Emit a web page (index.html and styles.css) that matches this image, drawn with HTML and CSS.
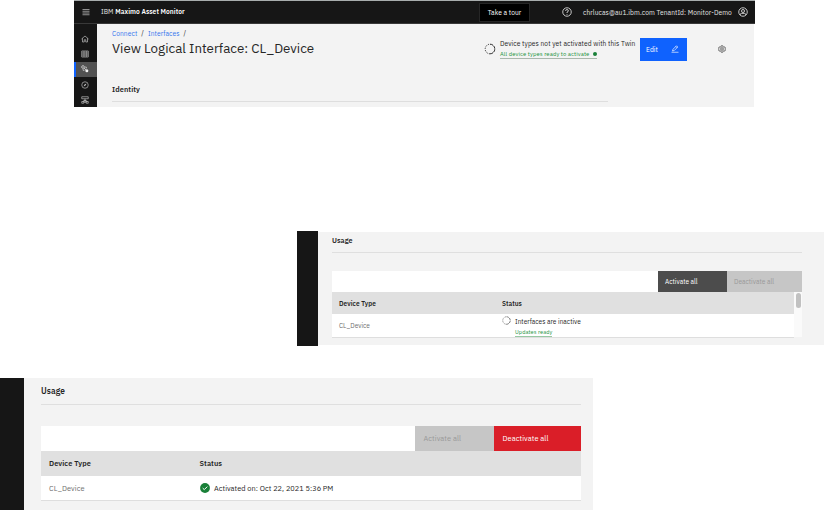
FILE: index.html
```
<!DOCTYPE html>
<html lang="en">
<head>
<meta charset="utf-8">
<title>Maximo Asset Monitor</title>
<link rel="stylesheet" href="styles.css">
</head>
<body>
<section class="monitor">
  <header class="topbar">
    <svg class="menu" viewBox="0 0 16 16"><path d="M1 3h14M1 6.500h14M1 10h14M1 13.500h14"/></svg>
    <div class="brand"><span>IBM</span> <b>Maximo Asset Monitor</b></div>
    <button class="tour"><span>Take a tour</span></button>
    <svg class="help" viewBox="0 0 20 20"><circle cx="10" cy="10" r="8.500"/><path d="M7.200 8V7.500Q7.200 5.200 10 5.200T12.800 7.600Q12.800 9.500 10 10.300V12M10 14v1.500"/></svg>
    <span class="account">chrlucas@au1.ibm.com TenantId: Monitor-Demo</span>
    <svg class="user" viewBox="0 0 20 20"><circle cx="10" cy="10" r="8.500"/><circle cx="10" cy="8" r="3"/><path d="M4.700 16v-1q0-2.200 2.300-2.200h6q2.300 0 2.300 2.200v1"/></svg>
  </header>
  <div class="shell">
    <nav class="rail">
      <a><svg viewBox="0 0 16 16"><path d="M1 8l7-6 7 6M3 6.500V14h3.500V9.500h3V14H13V6.500"/></svg></a>
      <a><svg viewBox="0 0 16 16"><path d="M1.500 2h13v12h-13zM1.500 6h13M1.500 10h13M6 2v12M10.500 2v12"/></svg></a>
      <a class="current"><svg viewBox="0 0 16 16"><circle cx="4" cy="4" r="2.700"/><path d="M6 6l4 4M8.500 4h2v3M4 8.500v2h3"/><circle class="solid" cx="11.700" cy="11.700" r="3"/></svg></a>
      <a><svg viewBox="0 0 16 16"><circle cx="8" cy="8" r="6.500"/><path class="solid" d="M11 5L9 9 5 11 7 7z"/></svg></a>
      <a><svg viewBox="0 0 16 16"><path d="M1.500 1.500h13v4h-13zM8 5.500v4M8 8L3.500 11M8 8l4.500 3M1.500 11h4v3.500h-4zM10.500 11h4v3.500h-4zM6 9.500h4v3H6z"/></svg></a>
    </nav>
    <main class="page">
      <div class="crumbs"><a>Connect</a><i>/</i><a>Interfaces</a><i>/</i></div>
      <div class="heading">
        <h1>View Logical Interface: CL_Device</h1>
        <svg class="spinner" viewBox="0 0 12 12"><path d="M6 1.200A4.800 4.800 0 0 1 6 10.800" stroke-dasharray="3.200 .6"/><path d="M6 10.800A4.800 4.800 0 0 1 6 1.200" stroke-dasharray="1.200 1.300"/></svg>
        <div class="notice"><span class="message">Device types not yet activated with this Twin</span><a class="ready"><span>All device types ready to activate</span><i></i></a></div>
        <button class="edit"><span>Edit</span><svg viewBox="0 0 16 16"><path d="M1 14.500h14M3 12l1-3.500L11 1.500l2.500 2.500-7 7zM9.500 3L12 5.500"/></svg></button>
        <svg class="gear" viewBox="0 0 16 16"><path d="M6.500 1.500h3l.5 2 1.500.8 2-.5 1.500 2.500L13.500 8l1.500 1.700-1.500 2.500-2-.5-1.500.8-.5 2h-3l-.5-2-1.500-.8-2 .5L1 9.700 2.500 8 1 6.300l1.500-2.500 2 .5L6 3.500z"/><circle cx="8" cy="8" r="2.600"/></svg>
      </div>
      <h2 class="identity">Identity</h2>
      <div class="rule"></div>
    </main>
  </div>
</section>

<section class="usage inactive">
  <div class="edge"></div>
  <div class="body">
    <h2>Usage</h2>
    <div class="toolbar"><button class="activate">Activate all</button><button class="deactivate">Deactivate all</button></div>
    <div class="scroller">
      <div class="table">
        <div class="row head"><b class="type">Device Type</b><b class="status">Status</b></div>
        <div class="row"><span class="type">CL_Device</span>
          <div class="status"><svg class="spinner" viewBox="0 0 12 12"><path d="M6 1A5 5 0 0 1 6 11" stroke-dasharray="3.200 .8"/><path d="M6 11A5 5 0 0 1 6 1" stroke-dasharray="1.300 1.300"/></svg><div class="lines"><span class="message">Interfaces are inactive</span><a>Updates ready</a></div></div>
        </div>
      </div>
      <div class="track"><div class="thumb"></div></div>
    </div>
  </div>
</section>

<section class="usage active">
  <div class="edge"></div>
  <div class="body">
    <h2>Usage</h2>
    <div class="toolbar"><button class="activate">Activate all</button><button class="deactivate">Deactivate all</button></div>
    <div class="table">
      <div class="row head"><b class="type">Device Type</b><b class="status">Status</b></div>
      <div class="row"><span class="type">CL_Device</span>
        <div class="status"><svg class="check" viewBox="0 0 10 10"><circle cx="5" cy="5" r="4.900"/><path d="M2.700 5.100l1.600 1.500 3-3"/></svg><span class="message">Activated on: Oct 22, 2021 5:36 PM</span></div>
      </div>
    </div>
  </div>
</section>
</body>
</html>
```
FILE: styles.css
```
* { box-sizing: border-box; }
body {
  margin: 0;
  height: 510px;
  overflow: hidden;
  background: #fff;
  color: #262626;
  font-family: "IBM Plex Sans", "Noto Sans", sans-serif;
  font-size: 6.67px;
  letter-spacing: .076px;
  line-height: 10px;
  white-space: nowrap;
}
h1, h2 { margin: 0; }
b, h2 { font-weight: 600; }
i { font-style: normal; }
svg { display: block; flex: none; fill: none; stroke: currentColor; }
button { display: flex; align-items: center; border: 0; padding: 0; font: inherit; letter-spacing: inherit; color: inherit; flex: none; }

.monitor { width: 681px; height: 107px; margin-left: 74px; border-top: 1px solid #a8adad; }
.topbar { display: flex; align-items: center; height: 23px; background: #161616; color: #e4e4e4; border-bottom: 1px solid #393939; }
.menu { width: 8px; height: 8px; margin-left: 7.5px; stroke-width: 1.2; }
.brand { width: 378px; margin-left: 11.5px; letter-spacing: .05px; }
.brand b { color: #fff; }
.tour { width: 51px; height: 19px; background: #000; border: 1px solid #262626; justify-content: center; color: #fff; }
.tour span { padding-top: 1px; }
.help { width: 10px; height: 10px; margin-left: 32px; stroke-width: 1.7; }
.account { width: 150px; margin-left: 11px; padding-top: 1px; }
.user { width: 10px; height: 10px; margin-left: 5px; stroke-width: 1.7; }
.shell { display: flex; height: 83px; }
.rail { width: 23px; padding-top: 7px; background: #161616; color: #c6c6c6; flex: none; overflow: hidden; }
.rail a { display: flex; align-items: center; height: 15.4px; padding-left: 6px; border-left: 1px solid transparent; }
.rail svg { width: 8px; height: 8px; stroke-width: 1.3; }
.rail .current { background: #525252; border-left: 2px solid #0f62fe; padding-left: 5px; color: #f4f4f4; }
.rail .solid { fill: currentColor; stroke: none; }
.page { width: 657px; padding: 5px 0 0 15px; background: #f3f3f3; }
.crumbs { display: flex; height: 9px; line-height: 9px; }
.crumbs a { color: #3475ee; }
.crumbs i { margin: 0 4px; }
.heading { display: flex; align-items: center; height: 23px; }
h1 { width: 372px; height: 23px; font-size: 13.33px; line-height: 20px; font-weight: 400; letter-spacing: 0; }
.spinner { width: 12px; height: 12px; stroke-width: 1; margin-bottom: 1px; }
.notice { display: flex; flex-direction: column; align-items: flex-start; width: 137px; margin: 0 0 1px 4px; }
.notice .message { height: 10px; }
.ready { display: flex; align-items: center; height: 10px; border-bottom: 1px solid #aab7ad; color: #24943f; font-size: 5.85px; letter-spacing: .1px; }
.ready i { width: 4px; height: 4px; border-radius: 50%; background: #198038; margin-left: 4px; }
.edit { width: 47px; height: 23px; margin-left: 3px; padding: 0 8px 0 6px; background: #0f62fe; color: #fff; justify-content: space-between; }
.edit svg { width: 8px; height: 8px; margin-bottom: 1px; stroke-width: 1.3; }
.gear { width: 8px; height: 8px; margin: 0 0 1px 30.5px; stroke-width: 1.3; }
.identity { margin-top: 22px; font-size: 7.4px; line-height: 12px; }
.rule { width: 496px; margin-top: 6px; border-top: 1px solid #dedede; }

.usage { display: flex; }
.usage .edge { background: #161616; flex: none; }
.usage .body { background: #f3f3f3; }
.usage .body > h2 { border-bottom: 1px solid #dfdfdf; }
.toolbar { display: flex; justify-content: flex-end; background: #fff; }
.row { display: flex; align-items: center; background: #fff; border-bottom: 1px solid #dedede; }
.row.head { background: #e0e0e0; border: 0; }
.row .type { flex: none; }
.row span.type { color: #6f6f6f; }
div.status { display: flex; }

.inactive { width: 527px; height: 115px; margin: 124px 0 0 297px; font-size: 6.5px; letter-spacing: .03px; }
.inactive .edge { width: 21px; }
.inactive .body { width: 506px; height: 113px; margin-top: 1px; padding: 0 22px 0 14px; }
.inactive h2 { height: 21px; font-size: 7.2px; line-height: 17px; }
.inactive .toolbar { height: 21px; margin-top: 18px; }
.inactive button { padding-left: 7px; }
.inactive .activate { width: 69px; background: #4c4c4c; color: #fff; }
.inactive .deactivate { width: 75px; background: #c6c6c6; color: #999; }
.scroller { display: flex; }
.inactive .table { width: 462px; }
.inactive .row { height: 24px; padding-left: 7px; }
.inactive .head { height: 22px; font-size: 6.55px; padding-top: 1px; letter-spacing: .05px; }
.inactive .type { width: 163px; }
.inactive .spinner { width: 9px; height: 9px; margin-top: 2px; color: #525252; }
.lines { display: flex; flex-direction: column; align-items: flex-start; margin-left: 4px; padding-top: 3px; }
.lines .message { height: 10px; line-height: 10px; }
.lines a { height: 9px; line-height: 9px; font-size: 5.6px; letter-spacing: .08px; color: #24943f; border-bottom: 1px solid #97c9a3; margin-top: 1px; }
.track { width: 8px; height: 45px; padding: 1px 1px 0 2px; background: #fafafa; }
.thumb { width: 5px; height: 15px; border-radius: 3px; background: #c1c1c1; }

.active { width: 593px; height: 132px; margin-top: 32px; font-size: 7.4px; }
.active .edge { width: 24px; }
.active .body { width: 569px; padding: 0 12px 0 17px; }
.active h2 { height: 27px; font-size: 8.3px; line-height: 25px; }
.active .toolbar { height: 25px; margin-top: 20.5px; }
.active button { padding-left: 8.5px; }
.active .activate { width: 79px; background: #c6c6c6; color: #999; }
.active .deactivate { width: 87px; background: #da1e28; color: #fff; }
.active .row { height: 25px; padding-left: 8px; }
.active .head { font-size: 7.4px; }
.active .type { width: 150px; }
.active .head .type { width: 150.5px; }
.active div.status { align-items: center; }
.active .message { padding-top: 1px; letter-spacing: .03px; }
.check { width: 10px; height: 10px; margin: 0 4px 0 1px; stroke: #fff; stroke-width: 1; }
.check circle { fill: #198038; stroke: none; }
```
